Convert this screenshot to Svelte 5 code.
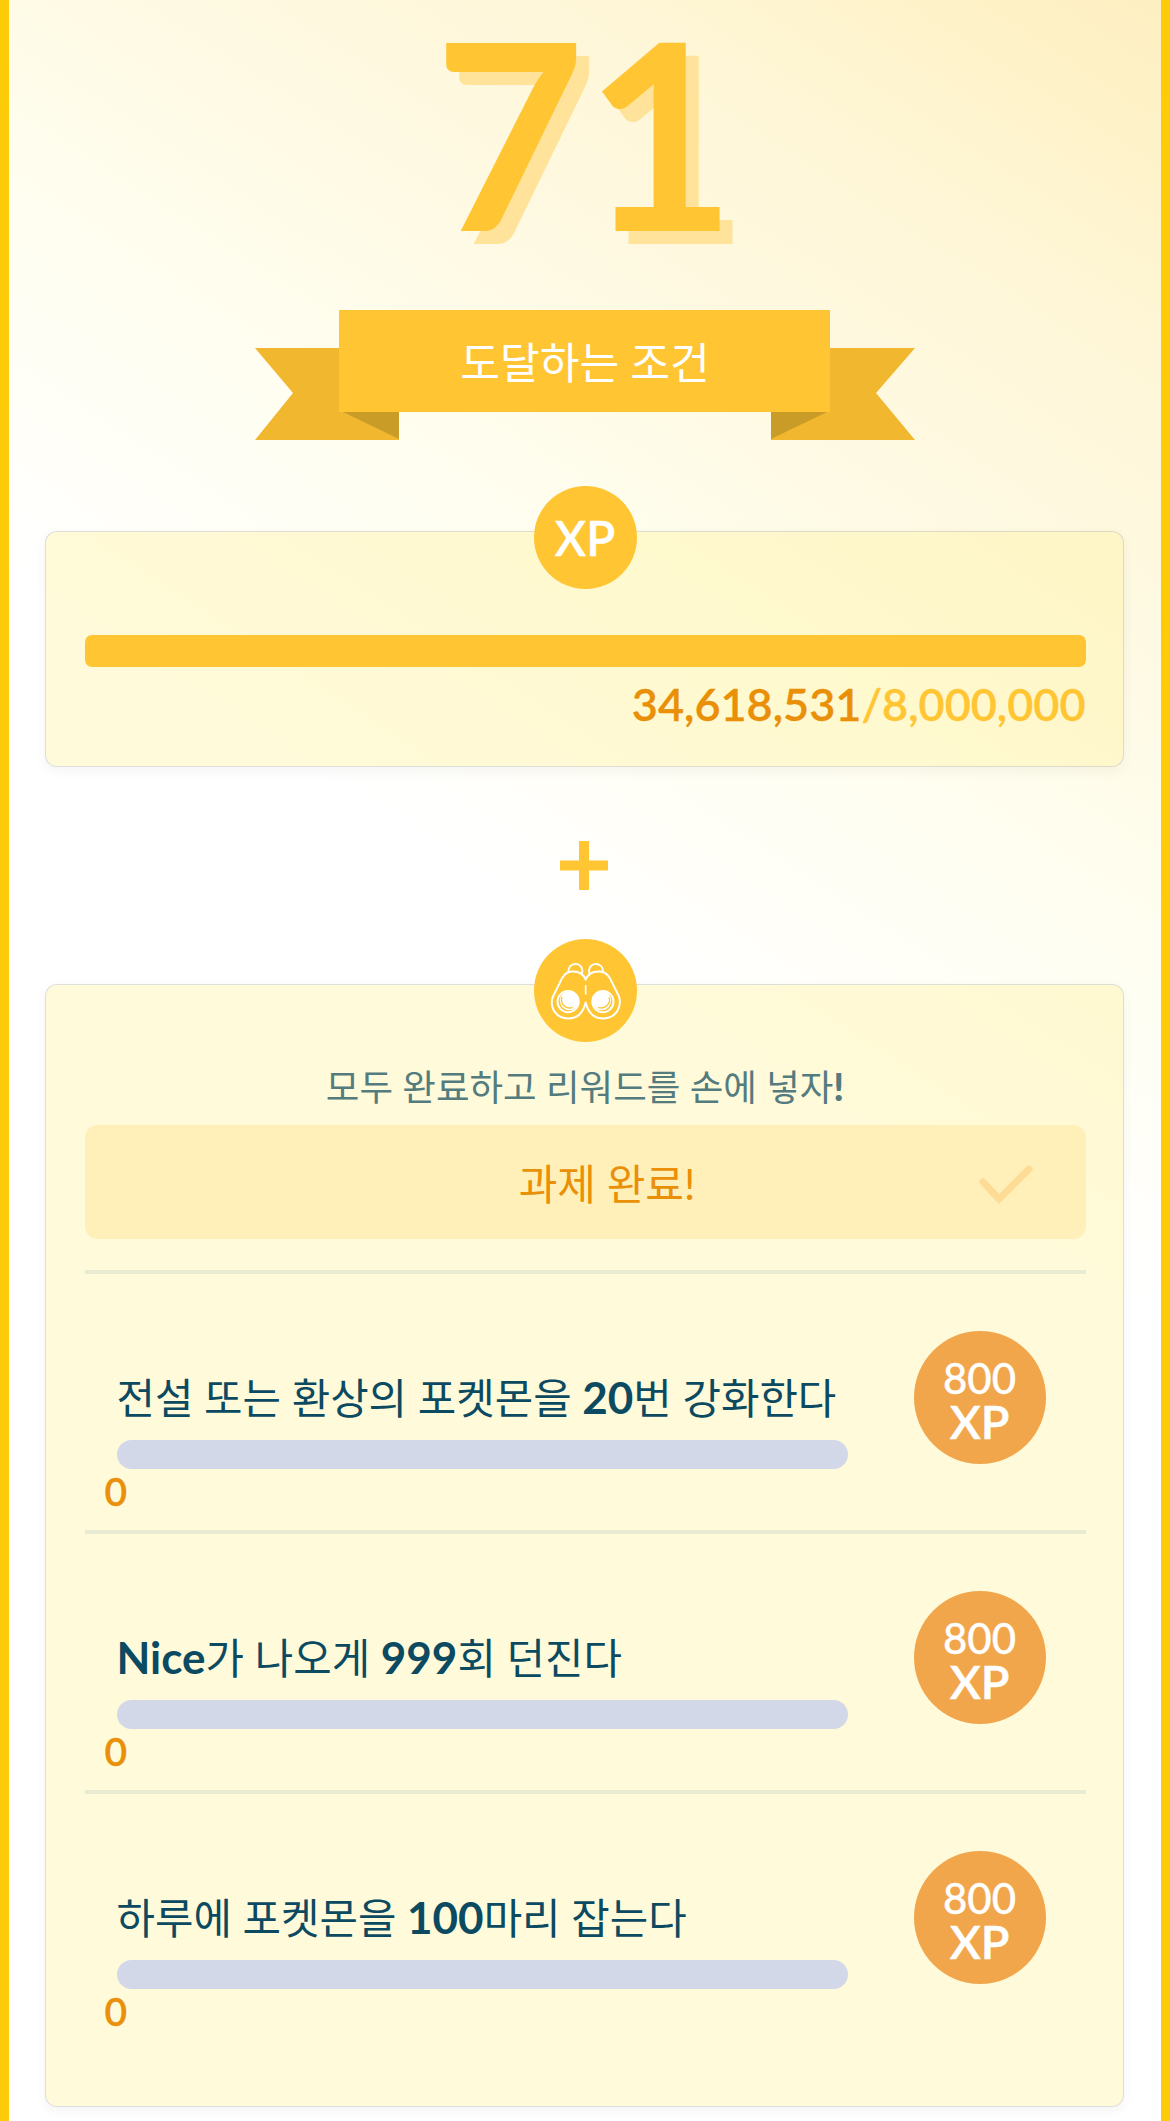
<script lang="ts">
  type Part = { text: string; strong?: boolean };
  type Task = { parts: Part[]; progress: number; reward: number };

  const level = 71;
  const tasks: Task[] = [
    { parts: [{ text: '전설 또는 환상의 포켓몬을 ' }, { text: '20', strong: true }, { text: '번 강화한다' }], progress: 0, reward: 800 },
    { parts: [{ text: 'Nice', strong: true }, { text: '가 나오게 ' }, { text: '999', strong: true }, { text: '회 던진다' }], progress: 0, reward: 800 },
    { parts: [{ text: '하루에 포켓몬을 ' }, { text: '100', strong: true }, { text: '마리 잡는다' }], progress: 0, reward: 800 }
  ];
</script>

<main class="page">
  <h1 class="level">{level}</h1>

  <div class="ribbon">
    <svg class="ribbon-shape" viewBox="0 0 660 131" aria-hidden="true">
      <path d="M0 38H144V130H0L38 83Z M660 38H516V130H660L621 83Z" fill="#f0b72f" />
      <path d="M88 102H144V129Z M572 102H516V129Z" fill="#c99c28" />
      <path d="M84 0H575V102H84Z" fill="#ffc533" />
    </svg>
    <span class="ribbon-label">도달하는 조건</span>
  </div>

  <section class="card xp-card">
    <div class="badge">XP</div>
    <div class="xp-bar"></div>
    <p class="xp-count"><span class="current">34,618,531</span><span>/8,000,000</span></p>
  </section>

  <svg class="plus" viewBox="0 0 48 49" aria-hidden="true">
    <path d="M24 0V49M0 24.5H48" stroke="#ffc533" stroke-width="10" />
  </svg>

  <section class="card task-card">
    <div class="badge">
      <svg viewBox="100 354 309 314" fill="none" stroke="#fff" stroke-width="6" stroke-linecap="round" stroke-linejoin="round" aria-hidden="true">
        <path d="M255 477C247 455 229 451 213 452C190 454 183 473 176 488L157 526C143 561 166 594 203 594C234 594 249 571 255 546C261 571 276 594 307 594C344 594 367 561 355 526L336 488C328 470 320 454 297 452C280 451 263 455 255 477Z" />
        <path d="M203 452C203 422 243 422 245 449L243 461M307 452C307 422 267 422 265 449L267 461" />
        <path d="M255 495V520" stroke-width="5" />
        <circle cx="202" cy="543" r="32" />
        <circle cx="307" cy="543" r="32" />
        <circle cx="206" cy="540" r="29" fill="#fff" stroke="none" />
        <circle cx="303" cy="540" r="29" fill="#fff" stroke="none" />
        <path d="M183 531C178 548 193 567 214 561M326 531C332 548 314 567 294 561" stroke="#ffc533" stroke-width="4" />
      </svg>
    </div>
    <p class="hint">모두 완료하고 리워드를 손에 넣자<b>!</b></p>
    <div class="done">
      <span>과제 완료!</span>
      <svg class="check" viewBox="0 0 54 40" fill="none" aria-hidden="true">
        <path d="M4 17L20 34L50 4" stroke="#ffdc95" stroke-width="7" stroke-linecap="round" />
      </svg>
    </div>

    <ul class="tasks">
      {#each tasks as task}
        <li class="task">
          <div class="task-main">
            <p class="task-title">{#each task.parts as part}{#if part.strong}<b>{part.text}</b>{:else}{part.text}{/if}{/each}</p>
            <div class="track"></div>
            <p class="progress">{task.progress}</p>
          </div>
          <div class="reward"><span>{task.reward}</span><b>XP</b></div>
        </li>
      {/each}
    </ul>
  </section>
</main>

<style>
  :global(body) {
    background: #fff;
  }
  .page {
    box-sizing: border-box;
    width: 1170px;
    height: 2121px;
    overflow: hidden;
    padding: 0 37px 0 35px;
    border: solid #fecb08;
    border-width: 0 9px;
    background: linear-gradient(33deg, #fff 54%, #fffef0 67%, #fef9e2 78%, #fef6d6 88%, #fef2c8 95%, #feefc2 100%);
    font-family: 'Lato', 'Noto Sans CJK KR', sans-serif;
    color: #0b4a60;
    display: flex;
    flex-direction: column;
    align-items: center;
  }
  p, h1, ul {
    margin: 0;
    padding: 0;
    font-weight: 400;
  }
  .level {
    height: 310px;
    padding-left: 2px;
    line-height: 260px;
    font-size: 260px;
    font-weight: 700;
    color: #ffc533;
    text-shadow: 13px 13px 0 #ffe39a;
    white-space: nowrap;
  }
  .ribbon {
    display: grid;
    width: 660px;
    height: 131px;
    margin-left: 2px;
    flex: none;
  }
  .ribbon-shape,
  .ribbon-label {
    grid-area: 1 / 1;
  }
  .ribbon-label {
    z-index: 1;
    height: 102px;
    line-height: 104px;
    text-align: center;
    color: #fff;
    font-size: 43.2px;
  }
  .card {
    box-sizing: border-box;
    width: 1079px;
    flex: none;
    padding: 0 37px 0 39px;
    border: 1px solid rgba(90, 90, 80, 0.2);
    border-radius: 12px;
    background: rgba(255, 243, 160, 0.4);
    background-clip: padding-box;
    box-shadow: 0 4px 12px rgba(60, 60, 60, 0.06);
    display: flex;
    flex-direction: column;
    align-items: center;
  }
  .xp-card {
    margin-top: 90px;
    height: 236px;
  }
  .badge {
    width: 103px;
    height: 103px;
    margin-top: -46px;
    flex: none;
    border-radius: 50%;
    background: #ffc533;
    color: #fff;
    font-size: 47.5px;
    font-weight: 600;
    -webkit-text-stroke: 0.4px #fff;
    line-height: 104px;
    text-align: center;
  }
  .badge svg {
    display: block;
    width: 103px;
    height: 104px;
  }
  .xp-bar {
    align-self: stretch;
    height: 32px;
    margin-top: 46px;
    border-radius: 7px;
    background: #ffc533;
  }
  .xp-count {
    align-self: flex-end;
    margin-top: 9px;
    line-height: 56px;
    font-size: 45px;
    font-weight: 600;
    -webkit-text-stroke: 0.3px currentColor;
    color: #ffc533;
  }
  .current {
    color: #e98f08;
  }
  .plus {
    width: 48px;
    height: 49px;
    margin-top: 74px;
    flex: none;
  }
  .task-card {
    margin-top: 94px;
    height: 1123px;
  }
  .hint {
    height: 82px;
    line-height: 90px;
    font-size: 36.5px;
    color: #547c7e;
  }
  .hint b {
    font-size: 38px;
    line-height: 1;
    font-weight: 900;
  }
  .done {
    box-sizing: border-box;
    align-self: stretch;
    display: grid;
    grid-template-columns: 1fr auto 1fr;
    align-items: center;
    height: 114px;
    margin-top: 1px;
    padding: 0 53px 0 97px;
    border-radius: 13px;
    background: #ffefb8;
    font-size: 42px;
    line-height: 60px;
    color: #e98f08;
  }
  .done span {
    grid-column: 2;
    padding-top: 3px;
  }
  .check {
    width: 54px;
    height: 40px;
    margin-top: 6px;
    justify-self: end;
  }
  .tasks {
    align-self: stretch;
    margin-top: 31px;
    list-style: none;
  }
  .task {
    box-sizing: border-box;
    height: 260px;
    padding: 0 40px 0 32px;
    border-top: 4px solid #e8ebd1;
    display: flex;
    justify-content: space-between;
  }
  .task-main {
    width: 731px;
    padding-top: 92px;
  }
  .task-title {
    height: 74px;
    line-height: 64px;
    font-size: 41.8px;
    white-space: nowrap;
  }
  .task-title b {
    font-size: 44px;
    line-height: 1;
  }
  .track {
    height: 29px;
    border-radius: 15px;
    background: #d2d8e8;
  }
  .progress {
    margin-left: -12px;
    line-height: 45px;
    font-size: 39px;
    font-weight: 600;
    -webkit-text-stroke: 0.3px currentColor;
    color: #e98f08;
  }
  .reward {
    box-sizing: border-box;
    width: 132px;
    height: 133px;
    margin-top: 57px;
    padding-top: 26px;
    border-radius: 50%;
    background: #f1a64c;
    color: #fff;
    display: flex;
    flex-direction: column;
    align-items: center;
    font-size: 42px;
    font-weight: 500;
    line-height: 42.5px;
    -webkit-text-stroke: 0.3px #fff;
  }
  .reward b {
    font-size: 47px;
    font-weight: 600;
    -webkit-text-stroke: 0.5px #fff;
  }
</style>
